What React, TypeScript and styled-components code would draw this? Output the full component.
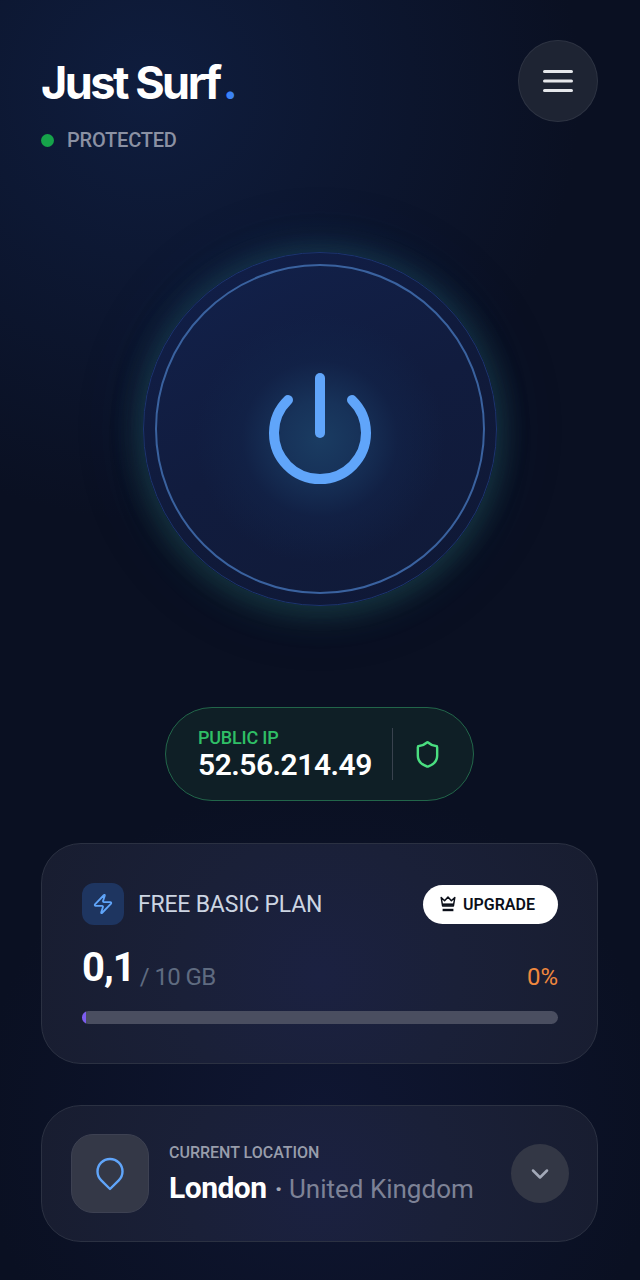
import { ChevronDown, Shield, Zap } from "lucide-react";
import styled, { createGlobalStyle } from "styled-components";

const GlobalStyle = createGlobalStyle`
  html, body {
    margin: 0;
    padding: 0;
    background: #0a1024;
  }
  * {
    box-sizing: border-box;
  }
`;

const Page = styled.div`
  width: 640px;
  height: 1280px;
  overflow: hidden;
  padding: 40px 42px 0 41px;
  font-family: Roboto, "Liberation Sans", sans-serif;
  color: #fff;
  background:
    radial-gradient(circle at 150px 90px, #0f1d3e 0, rgba(15, 29, 62, 0) 430px),
    radial-gradient(circle at 320px 1120px, rgba(20, 28, 66, 0.5) 0, rgba(20, 28, 66, 0) 340px),
    #0a1022;
`;

const Header = styled.header`
  display: flex;
  justify-content: space-between;
  align-items: flex-start;
`;

const Brand = styled.div`
  display: flex;
  flex-direction: column;
`;

const Logo = styled.h1`
  margin: 15px 0 0;
  font-family: Inter, sans-serif;
  font-size: 45px;
  line-height: 56px;
  font-weight: 650;
  letter-spacing: -2.5px;
  color: #fff;
`;

const LogoDot = styled.span`
  margin-left: 3px;
  color: #3b82f6;
`;

const Status = styled.div`
  display: flex;
  align-items: center;
  gap: 13px;
  margin-top: 17px;
  height: 24px;
  font-size: 20px;
  font-weight: 500;
  letter-spacing: -0.2px;
  color: #8b91a3;
`;

const StatusDot = styled.span`
  width: 13px;
  height: 13px;
  border-radius: 50%;
  background: #16a34a;
`;

const MenuButton = styled.button`
  display: flex;
  align-items: center;
  justify-content: center;
  width: 80px;
  height: 82px;
  padding: 0;
  border: 1px solid #2d3342;
  border-radius: 50%;
  background: #1e2433;
`;

const PowerArea = styled.div`
  display: flex;
  justify-content: center;
  margin-top: 100px;
  padding-left: 1px;
`;

const PowerOuter = styled.div`
  display: flex;
  align-items: center;
  justify-content: center;
  width: 354px;
  height: 354px;
  border-radius: 50%;
  border: 1px solid #1c3570;
  background: linear-gradient(150deg, #111f4a 0, #101a3a 55%, #0f1836 100%);
  box-shadow:
    0 9px 30px 3px rgba(44, 120, 96, 0.28),
    0 -6px 30px 3px rgba(34, 100, 130, 0.24),
    0 0 60px 14px rgba(24, 52, 100, 0.12);
`;

const PowerInner = styled.button`
  display: flex;
  align-items: center;
  justify-content: center;
  width: 330px;
  height: 330px;
  padding: 0;
  border-radius: 50%;
  border: 2px solid #3a629f;
  background:
    radial-gradient(circle at 50% 53%, #1a3c62 0, #173259 38px, rgba(18, 36, 74, 0.6) 78px, rgba(16, 28, 60, 0) 125px),
    linear-gradient(155deg, #12214b 0, #111c3e 50%, #101a38 100%);
`;

const IpPill = styled.div`
  display: flex;
  align-items: center;
  width: 309px;
  height: 94px;
  margin: 101px auto 0;
  padding-left: 32px;
  border-radius: 47px;
  border: 1.5px solid #22664a;
  background: #0f1f26;
`;

const IpText = styled.div`
  display: flex;
  flex-direction: column;
  width: 194px;
  padding-top: 2px;
`;

const IpLabel = styled.span`
  font-size: 18px;
  line-height: 20px;
  font-weight: 500;
  letter-spacing: -0.2px;
  color: #2fbf66;
`;

const IpValue = styled.span`
  font-size: 30px;
  line-height: 34px;
  font-weight: 600;
  letter-spacing: -0.5px;
  color: #fff;
`;

const IpDivider = styled.span`
  width: 1px;
  height: 52px;
  background: #39424e;
`;

const IpIcon = styled.span`
  display: flex;
  margin-left: 20px;
  color: #4ade80;
`;

const Card = styled.section<{ $height: number; $gap: number }>`
  height: ${(p) => p.$height}px;
  margin-top: ${(p) => p.$gap}px;
  border-radius: 40px;
  border: 1.5px solid #2b3142;
  background: radial-gradient(circle at 50% 60%, #1b2141 0, #1a2038 45%, #181d30 100%);
`;

const PlanCard = styled(Card)`
  padding: 39px 39px 0 40px;
`;

const PlanTop = styled.div`
  display: flex;
  align-items: center;
  justify-content: space-between;
`;

const PlanTitle = styled.div`
  display: flex;
  align-items: center;
  gap: 14px;
  font-size: 23px;
  letter-spacing: -0.2px;
  color: #cdd5e2;
`;

const BoltBox = styled.span`
  display: flex;
  align-items: center;
  justify-content: center;
  width: 42px;
  height: 42px;
  border-radius: 12px;
  background: #1e3560;
  color: #60a5fa;
`;

const UpgradeButton = styled.button`
  display: flex;
  align-items: center;
  gap: 7px;
  width: 135px;
  height: 39px;
  padding: 0 0 0 17px;
  border: 0;
  border-radius: 20px;
  background: #fff;
  color: #0b0f19;
  font-family: inherit;
  font-size: 16px;
  font-weight: 600;
`;

const UsageRow = styled.div`
  display: flex;
  justify-content: space-between;
  align-items: flex-end;
  margin-top: 20px;
  height: 46px;
`;

const UsageLeft = styled.div`
  display: flex;
  align-items: flex-end;
`;

const UsageValue = styled.span`
  font-size: 40px;
  line-height: 46px;
  font-weight: 700;
  letter-spacing: -1px;
  color: #fff;
`;

const UsageTotal = styled.span`
  margin-left: 5px;
  font-size: 24px;
  line-height: 28px;
  letter-spacing: -0.6px;
  color: #5f6b80;
`;

const UsagePercent = styled.span`
  font-size: 24px;
  line-height: 28px;
  color: #f0883e;
`;

const Track = styled.div`
  height: 13px;
  margin-top: 20px;
  border-radius: 7px;
  overflow: hidden;
  background: #4a4e60;
`;

const Fill = styled.div`
  height: 100%;
  background: #7c5cf0;
`;

const LocationCard = styled(Card)`
  display: flex;
  align-items: center;
  padding: 0 28px 0 29px;
`;

const PinBox = styled.span`
  display: flex;
  align-items: center;
  justify-content: center;
  flex-shrink: 0;
  width: 78px;
  height: 79px;
  border-radius: 22px;
  border: 1px solid #3d4152;
  background: #343847;
`;

const LocationText = styled.div`
  display: flex;
  flex-direction: column;
  flex: 1;
  margin-left: 20px;
  padding-top: 2px;
`;

const LocationLabel = styled.span`
  font-size: 16px;
  line-height: 20px;
  font-weight: 500;
  color: #989dab;
`;

const LocationName = styled.div`
  display: flex;
  align-items: baseline;
  margin-top: 7px;
  line-height: 36px;
`;

const City = styled.span`
  font-size: 30px;
  font-weight: 700;
  letter-spacing: -0.5px;
  color: #fff;
`;

const Country = styled.span`
  margin-left: 8px;
  font-size: 26px;
  color: #7d8296;
`;

const Separator = styled.span`
  font-weight: 700;
  color: #a2a7b6;
`;

const ChevronButton = styled.button`
  display: flex;
  align-items: center;
  justify-content: center;
  flex-shrink: 0;
  width: 58px;
  height: 59px;
  padding: 0;
  border: 0;
  border-radius: 50%;
  background: #333745;
  color: #a3a9b8;
`;

export default function App() {
  const usedPercent = 0.8;

  return (
    <Page>
      <GlobalStyle />
      <Header>
        <Brand>
          <Logo>
            Just Surf<LogoDot>.</LogoDot>
          </Logo>
          <Status>
            <StatusDot />
            PROTECTED
          </Status>
        </Brand>
        <MenuButton aria-label="Menu">
          <svg width="30" height="24" viewBox="0 0 30 24" fill="none" stroke="#e5e7eb" strokeWidth="3" strokeLinecap="round">
            <path d="M1.5 2.5h27M1.5 12h27M1.5 21.5h27" />
          </svg>
        </MenuButton>
      </Header>

      <PowerArea>
        <PowerOuter>
          <PowerInner aria-label="Power">
            <svg width="102" height="112" viewBox="0 0 102 112" fill="none" stroke="#60a5fa" strokeWidth="10" strokeLinecap="round">
              <path d="M51 5v55" />
              <path d="M19 27a46 46 0 1 0 64 0" />
            </svg>
          </PowerInner>
        </PowerOuter>
      </PowerArea>

      <IpPill>
        <IpText>
          <IpLabel>PUBLIC IP</IpLabel>
          <IpValue>52.56.214.49</IpValue>
        </IpText>
        <IpDivider />
        <IpIcon>
          <Shield size={29} strokeWidth={2} />
        </IpIcon>
      </IpPill>

      <PlanCard $height={221} $gap={42}>
        <PlanTop>
          <PlanTitle>
            <BoltBox>
              <Zap size={22} strokeWidth={2} />
            </BoltBox>
            FREE BASIC PLAN
          </PlanTitle>
          <UpgradeButton>
            <svg width="16" height="16" viewBox="0 0 16 16" fill="none" stroke="#0b0f19" strokeWidth="1.5" strokeLinejoin="round">
              <path d="M1.2 1.5 4.6 4.8 8 1 11.4 4.8 14.8 1.5 13.4 10H2.6Z" />
              <path d="M2.6 8.6h10.8" strokeWidth="2.4" />
              <path d="M2.6 14h10.8" strokeWidth="2.4" />
            </svg>
            UPGRADE
          </UpgradeButton>
        </PlanTop>
        <UsageRow>
          <UsageLeft>
            <UsageValue>0,1</UsageValue>
            <UsageTotal>/ 10 GB</UsageTotal>
          </UsageLeft>
          <UsagePercent>0%</UsagePercent>
        </UsageRow>
        <Track>
          <Fill style={{ width: `${usedPercent}%` }} />
        </Track>
      </PlanCard>

      <LocationCard $height={137} $gap={41}>
        <PinBox>
          <svg width="30" height="34" viewBox="0 0 30 34" fill="none" stroke="#60a5fa" strokeWidth="2.4" strokeLinejoin="round">
            <path d="M15 32 6.26 23.43a12.5 12.5 0 1 1 17.48 0Z" />
          </svg>
        </PinBox>
        <LocationText>
          <LocationLabel>CURRENT LOCATION</LocationLabel>
          <LocationName>
            <City>London</City>
            <Country>
              <Separator>·</Separator> United Kingdom
            </Country>
          </LocationName>
        </LocationText>
        <ChevronButton aria-label="Change location">
          <ChevronDown size={28} strokeWidth={2.2} />
        </ChevronButton>
      </LocationCard>
    </Page>
  );
}
